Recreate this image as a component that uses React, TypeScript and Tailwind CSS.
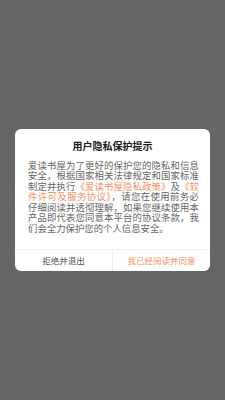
export default function App() {
  return (
    <div
      className="w-[225px] h-[400px] bg-[#666666] flex items-center justify-center"
      style={{ fontFamily: '"Noto Sans CJK SC", "Noto Sans", sans-serif' }}
    >
      <div className="w-[195px] bg-white rounded-[6px] overflow-hidden">
        <div className="pt-[10px] text-center text-[10px] leading-[14px] font-bold text-[#1a1a1a]">
          用户隐私保护提示
        </div>
        <p className="mt-[7px] pl-[13px] pr-[11px] text-[9.4px] leading-[10.4px] text-[#666666] text-justify">
          爱读书屋为了更好的保护您的隐私和信息安全，根据国家相关法律规定和国家标准制定并执行
          <span className="text-[#f0925f]">《爱读书屋隐私政策》</span>及
          <span className="text-[#f0925f]">《软件许可及服务协议》</span>
          ，请您在使用前务必仔细阅读并透彻理解，如果您继续使用本产品即代表您同意本平台的协议条款，我们会全力保护您的个人信息安全。
        </p>
        <div className="mt-[16px] flex border-t border-[#efefef] h-[22px]">
          <button className="flex-1 text-[8.5px] text-[#555555] flex items-center justify-center">
            拒绝并退出
          </button>
          <button className="flex-1 border-l border-[#efefef] text-[8.5px] text-[#f0925f] flex items-center justify-center">
            我已经阅读并同意
          </button>
        </div>
      </div>
    </div>
  );
}
